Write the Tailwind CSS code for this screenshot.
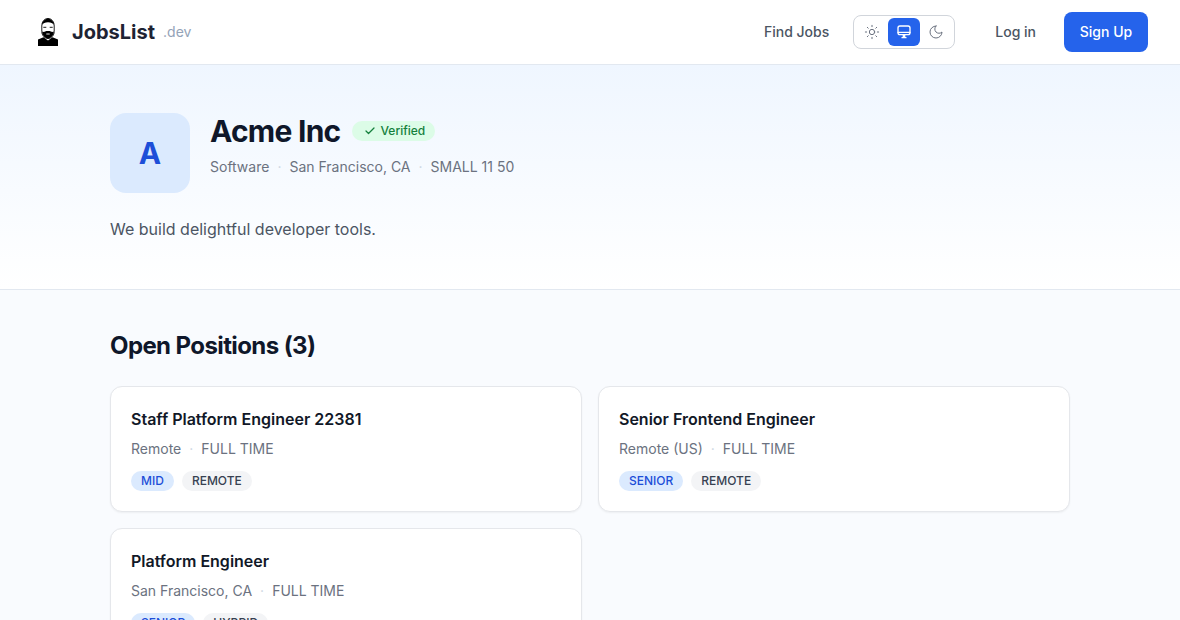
<!doctype html>
<html>
<head>
<meta charset="utf-8">
<script src="https://cdn.jsdelivr.net/npm/@tailwindcss/browser@4"></script>
</head>
<body class="font-['Inter',sans-serif] bg-[#f9fbfe] overflow-hidden h-[620px]">
<header class="h-[65px] bg-white border-b border-[#e2e8f0] flex items-center justify-between px-8">
  <div class="flex items-center gap-2">
    <svg class="w-8 h-8" viewBox="0 0 32 32">
      <path d="M6 30v-6.500l5.500-2.300 4.500 3.300 4.500-3.300 5.500 2.300V30z" fill="#000"/>
      <path d="M9.800 10c0-4.400 2.600-7.500 6.200-7.500s6.200 3.100 6.200 7.500v5.500c0 3.700-2.700 7-6.200 7s-6.200-3.300-6.200-7z" fill="#fff" stroke="#000" stroke-width=".9"/>
      <path d="M10 9c.5-3.700 2.700-6.200 6-6.200S21.500 5.300 22 9c-1.300-2-3-2.800-6-2.800S11.300 7 10 9z" fill="#000"/>
      <path d="M10.200 15.500l1.600.6 2.600-1.100h3.200l2.600 1.100 1.600-.6c0 3.800-2.500 6.900-5.800 6.900s-5.800-3.100-5.800-6.900z" fill="#000"/>
      <path d="M11.300 11.300h3M17.700 11.300h3" stroke="#000" stroke-width=".9"/>
      <path d="M14.300 18h3.400" stroke="#fff" stroke-width=".9"/>
    </svg>
    <span class="text-xl font-bold text-[#1e2333] leading-7">JobsList</span>
    <span class="text-sm text-[#94a3b8]">.dev</span>
  </div>
  <div class="flex items-center">
    <a class="text-sm font-medium text-[#4b5563]">Find Jobs</a>
    <div class="ml-6 w-[102px] h-[34px] rounded-lg border border-[#d1d5db] flex items-center justify-center bg-white">
      <span class="w-8 h-7 flex items-center justify-center text-[#6b7280]">
        <svg class="w-4 h-4" viewBox="0 0 24 24" fill="none" stroke="currentColor" stroke-width="1.500" stroke-linecap="round"><circle cx="12" cy="12" r="4"/><path d="M12 2v2M12 20v2M4.930 4.930l1.410 1.410M17.660 17.660l1.410 1.410M2 12h2M20 12h2M6.340 17.660l-1.410 1.410M19.070 4.930l-1.410 1.410"/></svg>
      </span>
      <span class="w-8 h-7 flex items-center justify-center bg-[#2563eb] rounded-md text-white">
        <svg class="w-4 h-4" viewBox="0 0 24 24" fill="none" stroke="currentColor" stroke-width="2" stroke-linecap="round" stroke-linejoin="round"><rect x="3" y="3" width="18" height="13" rx="3"/><path d="M3 12.500h18M9 20.500h6M11 16.500v4M13 16.500v4"/></svg>
      </span>
      <span class="w-8 h-7 flex items-center justify-center text-[#6b7280]">
        <svg class="w-4 h-4" viewBox="0 0 24 24" fill="none" stroke="currentColor" stroke-width="1.500" stroke-linecap="round" stroke-linejoin="round"><path d="M12 3a6 6 0 0 0 9 9 9 9 0 1 1-9-9Z"/></svg>
      </span>
    </div>
    <a class="ml-10 text-sm font-medium text-[#4b5563]">Log in</a>
    <a class="ml-7 w-[84px] h-10 flex items-center justify-center rounded-lg bg-[#2563eb] text-white text-sm font-medium">Sign Up</a>
  </div>
</header>

<section class="h-[225px] border-b border-[#e2e8f0] bg-linear-to-b from-[#eff6ff] to-white">
  <div class="max-w-[960px] mx-auto pt-12">
    <div class="flex gap-5">
      <div class="w-20 h-20 rounded-2xl bg-[#dbeafe] text-[#1d4ed8] text-3xl font-bold flex items-center justify-center">A</div>
      <div>
        <div class="flex items-center gap-3">
          <h1 class="text-3xl font-bold text-[#0f172a] tracking-tight leading-9">Acme Inc</h1>
          <span class="h-5 pl-3 pr-[10px] rounded-full bg-[#dcfce7] text-[#15803d] text-xs font-medium flex items-center gap-1">
            <svg class="w-3 h-3" viewBox="0 0 24 24" fill="none" stroke="currentColor" stroke-width="2.500" stroke-linecap="round" stroke-linejoin="round"><path d="M20 6 9 17l-5-5"/></svg>
            Verified
          </span>
        </div>
        <div class="mt-2 flex items-center gap-2 text-sm text-[#6b7280]">
          <span>Software</span><span class="text-[#cbd5e1]">·</span><span>San Francisco, CA</span><span class="text-[#cbd5e1]">·</span><span>SMALL 11 50</span>
        </div>
      </div>
    </div>
    <p class="mt-6 text-base text-[#4b5563]">We build delightful developer tools.</p>
  </div>
</section>

<main class="max-w-[960px] mx-auto pt-10">
  <h2 class="text-2xl font-bold text-[#0f172a] tracking-tight leading-8">Open Positions (3)</h2>
  <div class="mt-6 grid grid-cols-2 gap-4">
    <article class="h-[126px] bg-white rounded-xl border border-[#e5e7eb] shadow-xs px-5 pt-5">
      <h3 class="text-base font-semibold text-[#111827] leading-6">Staff Platform Engineer 22381</h3>
      <div class="mt-2 flex items-center gap-2 text-sm text-[#6b7280]"><span>Remote</span><span class="text-[#cbd5e1]">·</span><span>FULL TIME</span></div>
      <div class="mt-3 flex gap-2"><span class="h-5 px-[10px] rounded-full bg-[#dbeafe] text-[#1d4ed8] text-xs font-medium flex items-center">MID</span><span class="h-5 px-[10px] rounded-full bg-[#f3f4f6] text-[#374151] text-xs font-medium flex items-center">REMOTE</span></div>
    </article>
    <article class="h-[126px] bg-white rounded-xl border border-[#e5e7eb] shadow-xs px-5 pt-5">
      <h3 class="text-base font-semibold text-[#111827] leading-6">Senior Frontend Engineer</h3>
      <div class="mt-2 flex items-center gap-2 text-sm text-[#6b7280]"><span>Remote (US)</span><span class="text-[#cbd5e1]">·</span><span>FULL TIME</span></div>
      <div class="mt-3 flex gap-2"><span class="h-5 px-[10px] rounded-full bg-[#dbeafe] text-[#1d4ed8] text-xs font-medium flex items-center">SENIOR</span><span class="h-5 px-[10px] rounded-full bg-[#f3f4f6] text-[#374151] text-xs font-medium flex items-center">REMOTE</span></div>
    </article>
    <article class="h-[126px] bg-white rounded-xl border border-[#e5e7eb] shadow-xs px-5 pt-5">
      <h3 class="text-base font-semibold text-[#111827] leading-6">Platform Engineer</h3>
      <div class="mt-2 flex items-center gap-2 text-sm text-[#6b7280]"><span>San Francisco, CA</span><span class="text-[#cbd5e1]">·</span><span>FULL TIME</span></div>
      <div class="mt-3 flex gap-2"><span class="h-5 px-[10px] rounded-full bg-[#dbeafe] text-[#1d4ed8] text-xs font-medium flex items-center">SENIOR</span><span class="h-5 px-[10px] rounded-full bg-[#f3f4f6] text-[#374151] text-xs font-medium flex items-center">HYBRID</span></div>
    </article>
  </div>
</main>
</body>
</html>
